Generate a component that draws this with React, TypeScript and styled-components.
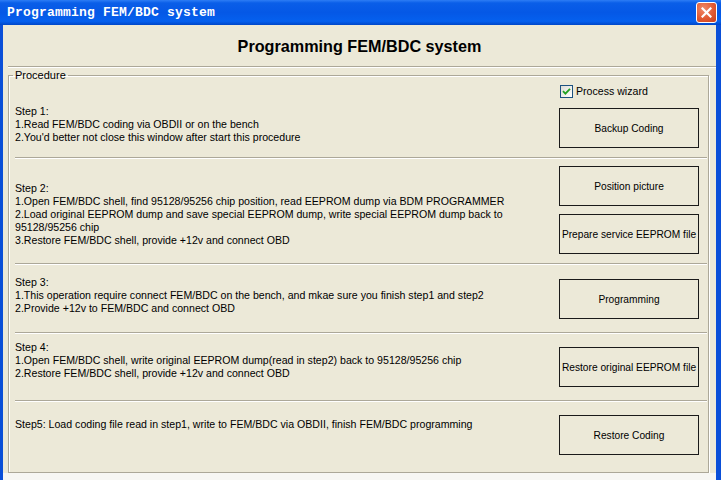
import styled, { createGlobalStyle } from 'styled-components';

const GlobalStyle = createGlobalStyle`
  html, body {
    margin: 0;
    padding: 0;
    background: #ffffff;
  }
  * {
    box-sizing: border-box;
  }
`;

const Window = styled.div`
  width: 721px;
  height: 480px;
  display: flex;
  flex-direction: column;
  background: #0a4fd8;
  overflow: hidden;
  font-family: 'Liberation Sans', Arial, sans-serif;
  font-size: 10.6px;
  color: #000;
`;

const TitleBar = styled.div`
  height: 25px;
  flex: none;
  display: flex;
  align-items: center;
  justify-content: space-between;
  padding: 0 4px 0 7px;
  background: linear-gradient(#2d7df5 0%, #0a5ee8 12%, #0558e6 50%, #0560ee 85%, #0047c8 100%);
`;

const TitleText = styled.span`
  font-family: 'Liberation Mono', 'Courier New', monospace;
  font-weight: bold;
  font-size: 13px;
  color: #ffffff;
  letter-spacing: 0.2px;
`;

const CloseButton = styled.div`
  width: 21px;
  height: 21px;
  border: 1px solid #ffffff;
  border-radius: 3px;
  background: radial-gradient(circle at 35% 30%, #f08a6a 0%, #e25a33 55%, #c8401c 100%);
  display: flex;
  align-items: center;
  justify-content: center;
`;

const Client = styled.div`
  flex: 1;
  margin: 0 5px 0 3px;
  background: #ece9d8;
  display: flex;
  flex-direction: column;
`;

const Header = styled.h1`
  margin: 0;
  height: 41px;
  display: flex;
  align-items: center;
  justify-content: center;
  font-family: 'Liberation Sans', Arial, sans-serif;
  font-weight: bold;
  font-size: 16.2px;
  padding-top: 2px;
`;

const Etched = styled.div<{ $left?: number; $right?: number }>`
  height: 2px;
  flex: none;
  margin: 0 ${(p) => p.$right ?? 0}px 0 ${(p) => p.$left ?? 0}px;
  border-top: 1px solid #aca899;
  border-bottom: 1px solid #ffffff;
`;

const Group = styled.fieldset`
  margin: 1px 7px 0 5px;
  padding: 0;
  height: 404px;
  border: 1px solid #aca899;
  box-shadow: inset 1px 1px 0 #ffffff, 1px 1px 0 #ffffff;
  display: flex;
  flex-direction: column;
`;

const Legend = styled.legend`
  margin-left: 4px;
  padding: 0 2px;
  line-height: 13px;
  font-size: 11px;
`;

const Row = styled.div<{ $h: number }>`
  height: ${(p) => p.$h}px;
  flex: none;
  display: grid;
  grid-template-columns: 1fr 140px;
  column-gap: 8px;
  padding: 0 9px 0 6px;
`;

const StepText = styled.div<{ $top: number }>`
  padding-top: ${(p) => p.$top}px;
  line-height: 13px;
  white-space: nowrap;
`;

const Actions = styled.div<{ $top: number }>`
  padding-top: ${(p) => p.$top}px;
  display: flex;
  flex-direction: column;
  gap: 8px;
`;

const Button = styled.button`
  width: 140px;
  height: 40px;
  padding: 0;
  border: 1px solid #1a1a1a;
  background: #ece9d8;
  font-family: 'Liberation Sans', Arial, sans-serif;
  font-size: 10.2px;
  color: #000;
  white-space: nowrap;
  overflow: hidden;
`;

const CheckRow = styled.label`
  display: flex;
  align-items: center;
  gap: 3px;
  height: 13px;
  margin-left: 1px;
  margin-bottom: 2px;
  line-height: 13px;
`;

const CheckBox = styled.span`
  width: 13px;
  height: 13px;
  border: 1px solid #1c5180;
  background: linear-gradient(135deg, #dcdcd5 0%, #f5f5f2 70%, #ffffff 100%);
  display: flex;
  align-items: center;
  justify-content: center;
`;

const BottomStrip = styled.div`
  height: 8px;
  flex: none;
  margin-top: auto;
  background: #f7f7f4;
`;

const steps = [
  {
    h: 75,
    top: 23,
    btnTop: 3,
    lines: [
      'Step 1:',
      '1.Read FEM/BDC coding via OBDII or on the bench',
      "2.You'd better not close this window after start this procedure",
    ],
    buttons: ['Backup Coding'],
    wizard: true,
  },
  {
    h: 104,
    top: 23,
    btnTop: 7,
    lines: [
      'Step 2:',
      '1.Open FEM/BDC shell, find 95128/95256 chip position, read EEPROM dump via BDM PROGRAMMER',
      '2.Load original EEPROM dump and save special EEPROM dump, write special EEPROM dump back to',
      '95128/95256 chip',
      '3.Restore FEM/BDC shell, provide +12v and connect OBD',
    ],
    buttons: ['Position picture', 'Prepare service EEPROM file'],
  },
  {
    h: 67,
    top: 11,
    btnTop: 14,
    lines: [
      'Step 3:',
      '1.This operation require connect FEM/BDC on the bench, and mkae sure you finish step1 and step2',
      '2.Provide +12v to FEM/BDC and connect OBD',
    ],
    buttons: ['Programming'],
  },
  {
    h: 66,
    top: 7,
    btnTop: 13,
    lines: [
      'Step 4:',
      '1.Open FEM/BDC shell, write original EEPROM dump(read in step2) back to 95128/95256 chip',
      '2.Restore FEM/BDC shell, provide +12v and connect OBD',
    ],
    buttons: ['Restore original EEPROM file'],
  },
  {
    h: 68,
    top: 16,
    btnTop: 13,
    lines: ['Step5: Load coding file read in step1, write to FEM/BDC via OBDII, finish FEM/BDC programming'],
    buttons: ['Restore Coding'],
  },
];

const App = () => {
  return (
    <>
      <GlobalStyle />
      <Window>
        <TitleBar>
          <TitleText>Programming FEM/BDC system</TitleText>
          <CloseButton>
            <svg width="11" height="11" viewBox="0 0 11 11">
              <path d="M1.5 1.5 L9.5 9.5 M9.5 1.5 L1.5 9.5" stroke="#ffffff" strokeWidth="2.2" strokeLinecap="square" />
            </svg>
          </CloseButton>
        </TitleBar>
        <Client>
          <Header>Programming FEM/BDC system</Header>
          <Etched $left={5} />
          <Group>
            <Legend>Procedure</Legend>
            {steps.map((step, i) => (
              <div key={i}>
                {i > 0 && <Etched $left={6} $right={1} />}
                <Row $h={step.h}>
                  <StepText $top={step.top}>
                    {step.lines.map((line) => (
                      <div key={line}>{line}</div>
                    ))}
                  </StepText>
                  <Actions $top={step.btnTop}>
                    {step.wizard && (
                      <CheckRow>
                        <CheckBox>
                          <svg width="9" height="9" viewBox="0 0 9 9">
                            <path d="M1 4.2 L3.4 6.6 L8 1.8" fill="none" stroke="#21a121" strokeWidth="1.8" />
                          </svg>
                        </CheckBox>
                        Process wizard
                      </CheckRow>
                    )}
                    {step.buttons.map((label) => (
                      <Button key={label}>{label}</Button>
                    ))}
                  </Actions>
                </Row>
              </div>
            ))}
          </Group>
          <BottomStrip />
        </Client>
      </Window>
    </>
  );
};

export default App;
